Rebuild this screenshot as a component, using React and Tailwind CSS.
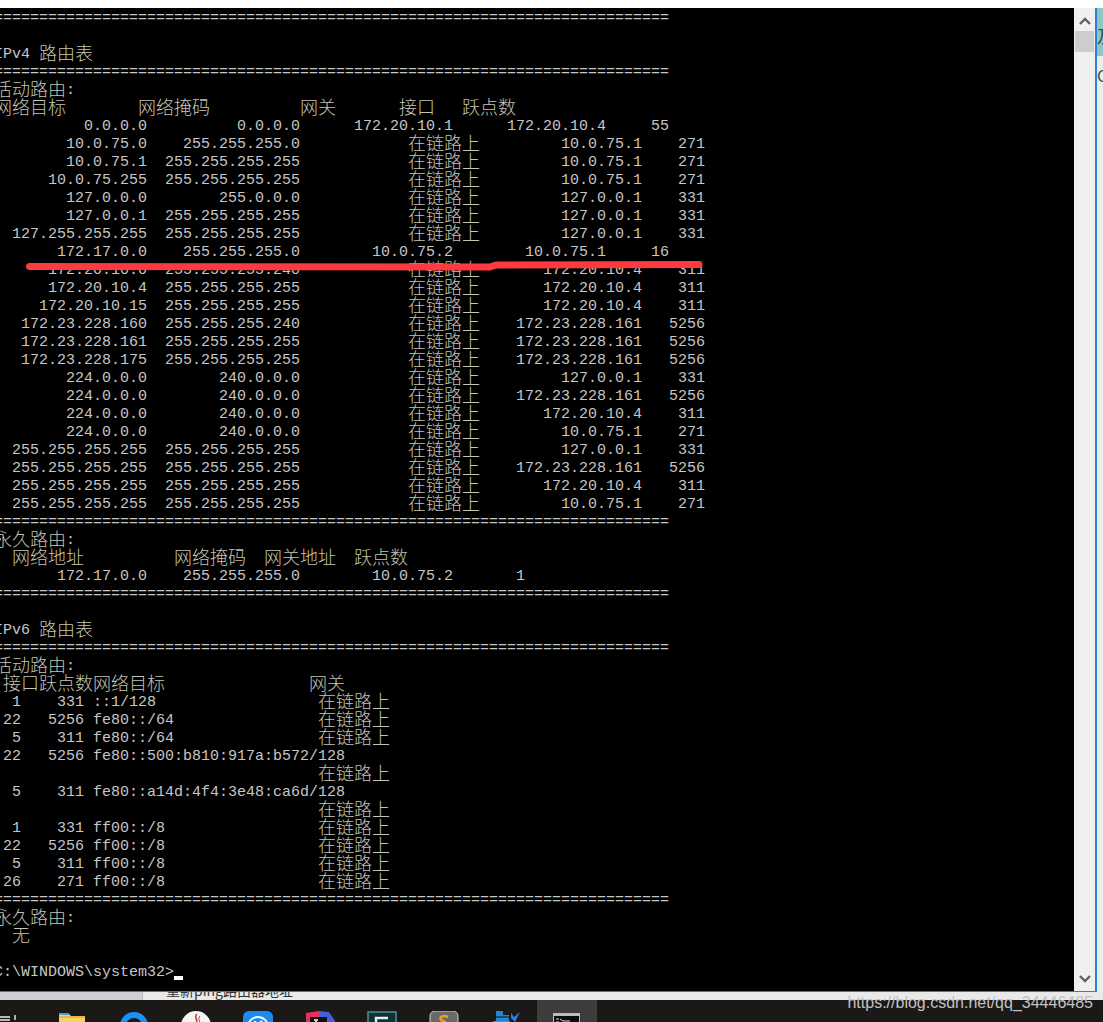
const SEP = "=".repeat(75);

const ROUTES = [
  ["0.0.0.0", "0.0.0.0", "172.20.10.1", "172.20.10.4", "55"],
  ["10.0.75.0", "255.255.255.0", null, "10.0.75.1", "271"],
  ["10.0.75.1", "255.255.255.255", null, "10.0.75.1", "271"],
  ["10.0.75.255", "255.255.255.255", null, "10.0.75.1", "271"],
  ["127.0.0.0", "255.0.0.0", null, "127.0.0.1", "331"],
  ["127.0.0.1", "255.255.255.255", null, "127.0.0.1", "331"],
  ["127.255.255.255", "255.255.255.255", null, "127.0.0.1", "331"],
  ["172.17.0.0", "255.255.255.0", "10.0.75.2", "10.0.75.1", "16"],
  ["172.20.10.0", "255.255.255.240", null, "172.20.10.4", "311"],
  ["172.20.10.4", "255.255.255.255", null, "172.20.10.4", "311"],
  ["172.20.10.15", "255.255.255.255", null, "172.20.10.4", "311"],
  ["172.23.228.160", "255.255.255.240", null, "172.23.228.161", "5256"],
  ["172.23.228.161", "255.255.255.255", null, "172.23.228.161", "5256"],
  ["172.23.228.175", "255.255.255.255", null, "172.23.228.161", "5256"],
  ["224.0.0.0", "240.0.0.0", null, "127.0.0.1", "331"],
  ["224.0.0.0", "240.0.0.0", null, "172.23.228.161", "5256"],
  ["224.0.0.0", "240.0.0.0", null, "172.20.10.4", "311"],
  ["224.0.0.0", "240.0.0.0", null, "10.0.75.1", "271"],
  ["255.255.255.255", "255.255.255.255", null, "127.0.0.1", "331"],
  ["255.255.255.255", "255.255.255.255", null, "172.23.228.161", "5256"],
  ["255.255.255.255", "255.255.255.255", null, "172.20.10.4", "311"],
  ["255.255.255.255", "255.255.255.255", null, "10.0.75.1", "271"],
];

const V6_ROUTES = [
  [" 1", "331", "::1/128"],
  ["22", "5256", "fe80::/64"],
  [" 5", "311", "fe80::/64"],
  ["22", "5256", "fe80::500:b810:917a:b572/128"],
  [" 5", "311", "fe80::a14d:4f4:3e48:ca6d/128"],
  [" 1", "331", "ff00::/8"],
  ["22", "5256", "ff00::/8"],
  [" 5", "311", "ff00::/8"],
  ["26", "271", "ff00::/8"],
];

function routeLine([dest, mask, gw, iface, metric]) {
  const head = dest.padStart(17) + mask.padStart(17);
  if (gw) return head + gw.padStart(17) + iface.padStart(17) + metric.padStart(7);
  return head + " ".repeat(12) + "在链路上" + iface.padStart(18) + metric.padStart(7);
}

function v6Lines([idx, metric, prefix]) {
  const head = " " + idx + metric.padStart(7) + " ";
  if (prefix.length > 25) return [head + prefix, " ".repeat(36) + "在链路上"];
  return [head + prefix.padEnd(25) + "在链路上"];
}

const LINES = [
  SEP,
  "",
  "IPv4 路由表",
  SEP,
  "活动路由:",
  "网络目标        网络掩码          网关       接口   跃点数",
  ...ROUTES.map(routeLine),
  SEP,
  "永久路由:",
  "  网络地址          网络掩码  网关地址  跃点数",
  "172.17.0.0".padStart(17) + "255.255.255.0".padStart(17) + "10.0.75.2".padStart(17) + "1".padStart(8),
  SEP,
  "",
  "IPv6 路由表",
  SEP,
  "活动路由:",
  " 接口跃点数网络目标                网关",
  ...V6_ROUTES.flatMap(v6Lines),
  SEP,
  "永久路由:",
  "  无",
  "",
];

function ConsoleLine({ text }) {
  const parts = text.split(/([\u4e00-\u9fff]+)/).filter(Boolean);
  return (
    <div className="flex h-[18px] whitespace-pre">
      {parts.map((part, i) =>
        /[\u4e00-\u9fff]/.test(part) ? (
          <span key={i} className="leading-[14px] text-[18px] font-light font-['Noto_Sans_CJK_SC',sans-serif] text-[#c4c4b4]">
            {part}
          </span>
        ) : (
          <span key={i} className="leading-[20px]">{part}</span>
        )
      )}
    </div>
  );
}

function Chevron({ up }) {
  return (
    <svg width="12" height="8" viewBox="0 0 12 8" className="text-[#606060]">
      <path d={up ? "M1 7 L6 2 L11 7" : "M1 1 L6 6 L11 1"} fill="none" stroke="currentColor" strokeWidth="2.4" />
    </svg>
  );
}

function Scrollbar() {
  return (
    <div className="w-[21px] bg-[#f0f0f0] flex flex-col justify-between shrink-0">
      <div>
        <div className="h-[23px] flex items-center justify-center pt-[3px]">
          <Chevron up />
        </div>
        <div className="h-[21px] w-[19px] mx-[1px] bg-[#cdcdcd]" />
      </div>
      <div className="h-[23px] flex items-center justify-center pb-[2px]">
        <Chevron />
      </div>
    </div>
  );
}

const IconFolder = (
  <svg width="30" height="30" viewBox="0 0 30 30">
    <path d="M2 2 H11 L14 5 H28 V28 H2 Z" fill="#f6d365" />
    <rect x="2" y="2" width="10" height="2" fill="#3aa0e8" />
    <rect x="2" y="5" width="26" height="2" fill="#e8b93f" />
  </svg>
);

const IconRing = (
  <svg width="30" height="30" viewBox="0 0 30 30">
    <circle cx="15" cy="15" r="11" fill="none" stroke="#1a90f0" strokeWidth="6" />
  </svg>
);

const IconJava = (
  <svg width="30" height="30" viewBox="0 0 30 30">
    <circle cx="15" cy="15" r="15" fill="#f4f4f4" />
    <path d="M16 3 C12 7 18 8 15 12" fill="none" stroke="#c8432f" strokeWidth="1.6" />
    <path d="M19 5 C16 8 20 9 18 12" fill="none" stroke="#c8432f" strokeWidth="1" />
  </svg>
);

const IconK = (
  <svg width="30" height="30" viewBox="0 0 30 30">
    <rect width="30" height="30" rx="6" fill="#1b8bf2" />
    <circle cx="15" cy="16" r="10" fill="none" stroke="#fff" strokeWidth="1.8" />
    <path d="M12 10 V22 M19 10 L12 16 L19 22" fill="none" stroke="#fff" strokeWidth="2" />
  </svg>
);

const IconIdea = (
  <svg width="30" height="30" viewBox="0 0 30 30">
    <path d="M1 2 L14 0 L16 12 H1 Z" fill="#e6305f" />
    <path d="M14 0 L24 1 L30 10 V30 H14 Z" fill="#3f60d8" />
    <rect x="5" y="6" width="17" height="18" fill="#111" />
    <path d="M9 9 H13 M11 9 V15 M9 15 H13" stroke="#f2f2f2" strokeWidth="1.6" />
  </svg>
);

const IconC = (
  <svg width="30" height="30" viewBox="0 0 30 30">
    <rect x="1" y="1" width="28" height="28" fill="#0f3237" stroke="#4e8a8c" strokeWidth="1.6" />
    <path d="M21 7 H9 V22 H21" fill="none" stroke="#e8f0f0" strokeWidth="2.4" />
  </svg>
);

const IconSublime = (
  <svg width="30" height="30" viewBox="0 0 30 30">
    <rect x="1" y="0" width="28" height="30" rx="5" fill="#6a6a6a" stroke="#c8c8c8" />
    <path d="M19 6 C12 3 9 8 14 10 C19 12 18 16 11 14" fill="none" stroke="#f09a28" strokeWidth="2.6" />
  </svg>
);

const IconDocker = (
  <svg width="30" height="30" viewBox="0 0 30 30">
    <path d="M5 0 H12 V4 H18 V10 H5 Z" fill="#1f86d8" />
    <path d="M2 10 H19 V24 H2 Z" fill="#2a9be6" />
    <path d="M20 2 L23 6 L29 1 L24 11 L20 7 Z" fill="#2f7fe0" />
    <path d="M2 6 H18 M2 13 H19" stroke="#101010" strokeWidth="1" />
  </svg>
);

const IconTerminal = (
  <svg width="27" height="30" viewBox="0 0 27 30">
    <rect x="0.5" y="0.5" width="26" height="29" fill="#0c0c0c" stroke="#bdbdbd" />
    <rect x="1" y="1" width="25" height="2" fill="#bdbdbd" />
    <path d="M3 6 H6 M7 6 L10 8 H17 M3 9 H6" stroke="#d8d8d8" strokeWidth="1" fill="none" />
  </svg>
);

function Taskbar() {
  const icons = [IconFolder, IconRing, IconJava, IconK, IconIdea, IconC, IconSublime, IconDocker];
  return (
    <div className="h-[22px] bg-[#1b1918] flex overflow-hidden shrink-0">
      <svg width="16" height="22" viewBox="0 0 16 22" className="-mr-[16px] shrink-0">
        <path d="M0 17 H10 M0 20 H10 M15 15 V20" stroke="#f0f0f0" strokeWidth="1.4" fill="none" />
      </svg>
      <div className="flex gap-[32px] pl-[57px]">
        {icons.map((icon, i) => (
          <div key={i} className="w-[30px] pt-[11px]">
            {icon}
          </div>
        ))}
        <div className="-ml-[16px] pl-[16px] pr-[17px] pt-[13px] bg-[#3d3d3d]">{IconTerminal}</div>
      </div>
    </div>
  );
}

export default function App() {
  return (
    <div className="relative w-[1103px] h-[1022px] overflow-hidden flex flex-col bg-white font-['Liberation_Mono',monospace]">
      <div className="h-[8px] bg-white shrink-0" />

      <div className="h-[984px] flex shrink-0">
        <div className="w-[1095px] flex flex-col border-b border-[#2b80d4] shrink-0">
          <div className="flex-1 flex min-h-0">
            <div className="relative flex-1 bg-black overflow-hidden">
              <div className="-ml-[6px] mt-[1px] text-[15px] text-[#c6c6c6]">
                {LINES.map((line, i) => (
                  <ConsoleLine key={i} text={line} />
                ))}
                <div className="h-[18px] leading-[20px] whitespace-pre relative">
                  C:\WINDOWS\system32&gt;
                  <span className="absolute left-[180px] top-[13px] w-[9px] h-[4px] bg-white" />
                </div>
              </div>
              <svg width="720" height="20" viewBox="0 0 720 20" className="absolute left-0 top-[249px]">
                <path
                  d="M29.5 9.5 L490 10 L496 8 L699 7.5"
                  fill="none"
                  stroke="#fd3a40"
                  strokeWidth="7"
                  strokeLinecap="round"
                  strokeLinejoin="round"
                />
              </svg>
            </div>
            <Scrollbar />
          </div>
        </div>
        <div className="w-[2px] bg-[#2b80d4] shrink-0" />
        <div className="flex-1 flex flex-col bg-[#e9eded] overflow-hidden text-[#37474f] font-['Noto_Sans_CJK_SC',sans-serif]">
          <div className="h-[48px] bg-[#8fc6c4] pt-[18px] text-[17px] leading-[20px] whitespace-nowrap">及</div>
          <div className="pt-[9px] text-[16px] leading-[20px]">C</div>
        </div>
      </div>

      <div className="h-[8px] flex overflow-hidden shrink-0 bg-[#e9e9e9]">
        <div className="w-[143px] bg-[#cfced3] border-r border-[#b8b8b8]" />
        <div className="pl-[23px] -mt-[10px] text-[14px] leading-[16px] text-[#333] whitespace-nowrap font-['Noto_Sans_CJK_SC',sans-serif]">
          重新ping路由器地址
        </div>
      </div>

      <Taskbar />

      <div className="absolute right-[10px] top-[993px] text-[16px] leading-[20px] text-[#c2c2c2] font-['Liberation_Sans',sans-serif]">
        https://blog.csdn.net/qq_34446485
      </div>
    </div>
  );
}
